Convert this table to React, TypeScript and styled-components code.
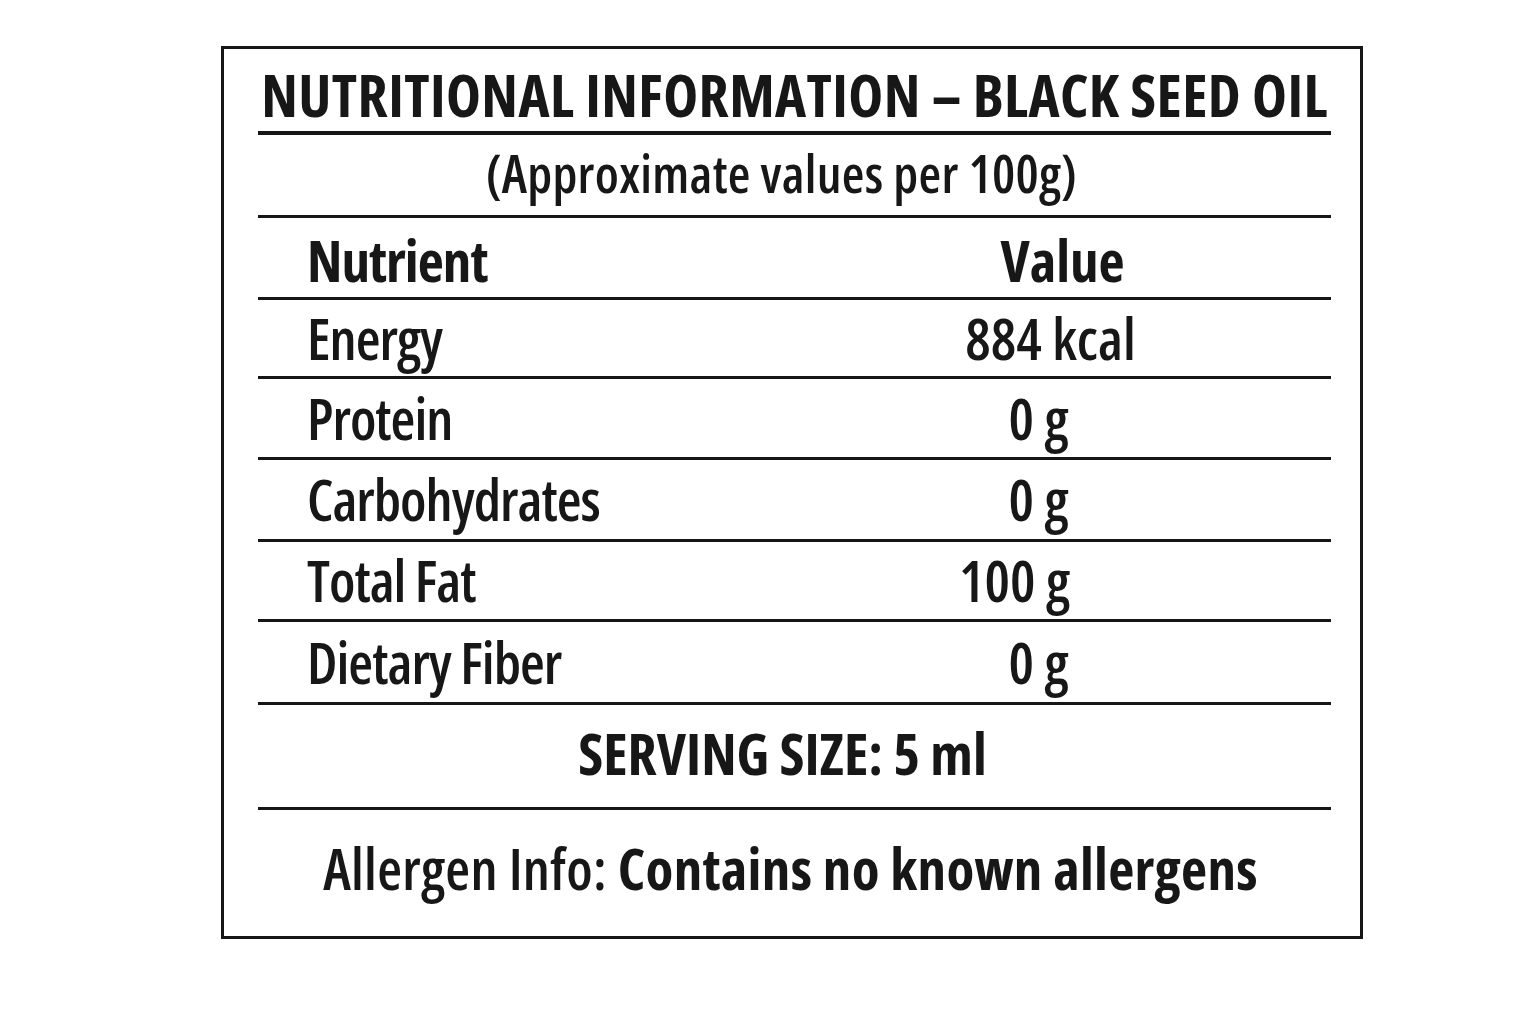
import styled, { createGlobalStyle } from 'styled-components';

const GlobalStyle = createGlobalStyle`
  body {
    margin: 0;
    background: #fff;
    font-family: "Open Sans", "Liberation Sans", sans-serif;
    font-stretch: 75%;
    color: #171717;
  }
`;

const Page = styled.div`
  width: 1536px;
  height: 1024px;
  padding: 46px 0 0 221px;
  box-sizing: border-box;
  background: #fff;
`;

const Label = styled.section`
  width: 1142px;
  height: 893px;
  box-sizing: border-box;
  border: 3px solid #161616;
  padding: 0 29px 0 34px;
  display: flex;
  flex-direction: column;
`;

const Title = styled.h1`
  margin: 0;
  height: 86px;
  padding-top: 9px;
  box-sizing: border-box;
  border-bottom: 4px solid #161616;
  display: flex;
  align-items: center;
  justify-content: center;
  font-size: 59px;
  font-weight: 700;
  line-height: 1;
  letter-spacing: 0.4px;
  white-space: nowrap;
`;

const Subtitle = styled.div`
  height: 83px;
  box-sizing: border-box;
  border-bottom: 3px solid #161616;
  display: flex;
  align-items: center;
  justify-content: center;
  padding: 0 26px 4px 0;
  font-size: 52px;
  font-weight: 560;
  line-height: 1;
  letter-spacing: 0.3px;
`;

const Row = styled.div<{ $h: number; $head?: boolean }>`
  height: ${(p) => p.$h}px;
  box-sizing: border-box;
  border-bottom: 3px solid #161616;
  display: grid;
  grid-template-columns: 492px 1fr;
  align-items: center;
  padding-top: ${(p) => (p.$head ? 6 : 0)}px;
  font-size: 57px;
  line-height: 1;
  white-space: nowrap;
`;

const Name = styled.div<{ $head?: boolean }>`
  padding-left: 49px;
  font-weight: ${(p) => (p.$head ? 700 : 620)};
  letter-spacing: -1px;
`;

// values sit a little off-centre in the label, so each row nudges its own
const Value = styled.div<{ $head?: boolean; $shift?: number }>`
  text-align: center;
  padding-left: ${(p) => (p.$head ? 44 : 0)}px;
  margin-left: ${(p) => (p.$shift ?? 0) * 2}px;
  font-weight: ${(p) => (p.$head ? 700 : 600)};
`;

const Serving = styled.div`
  height: 105px;
  box-sizing: border-box;
  border-bottom: 3px solid #161616;
  display: flex;
  align-items: center;
  justify-content: center;
  padding: 0 24px 6px 0;
  font-size: 57px;
  font-weight: 700;
  line-height: 1;
`;

const Allergen = styled.div`
  flex: 1;
  display: flex;
  align-items: center;
  justify-content: center;
  padding: 0 8px 10px 0;
  font-size: 57px;
  font-weight: 580;
  line-height: 1;
  white-space: nowrap;
  letter-spacing: 0.3px;

  strong {
    font-weight: 700;
  }
`;

const nutrients = [
  { name: 'Energy', value: '884 kcal', h: 79, shift: 10 },
  { name: 'Protein', value: '0 g', h: 81, shift: -2 },
  { name: 'Carbohydrates', value: '0 g', h: 82, shift: -2 },
  { name: 'Total Fat', value: '100 g', h: 80, shift: -26 },
  { name: 'Dietary Fiber', value: '0 g', h: 83, shift: -2 },
];

export default function App() {
  return (
    <>
      <GlobalStyle />
      <Page>
        <Label>
          <Title>NUTRITIONAL INFORMATION – BLACK SEED OIL</Title>
          <Subtitle>(Approximate values per 100g)</Subtitle>
          <Row $h={82} $head>
            <Name $head>Nutrient</Name>
            <Value $head>Value</Value>
          </Row>
          {nutrients.map((n) => (
            <Row key={n.name} $h={n.h}>
              <Name>{n.name}</Name>
              <Value $shift={n.shift}>{n.value}</Value>
            </Row>
          ))}
          <Serving>SERVING SIZE: 5 ml</Serving>
          <Allergen>
            Allergen Info:&nbsp;<strong>Contains no known allergens</strong>
          </Allergen>
        </Label>
      </Page>
    </>
  );
}
